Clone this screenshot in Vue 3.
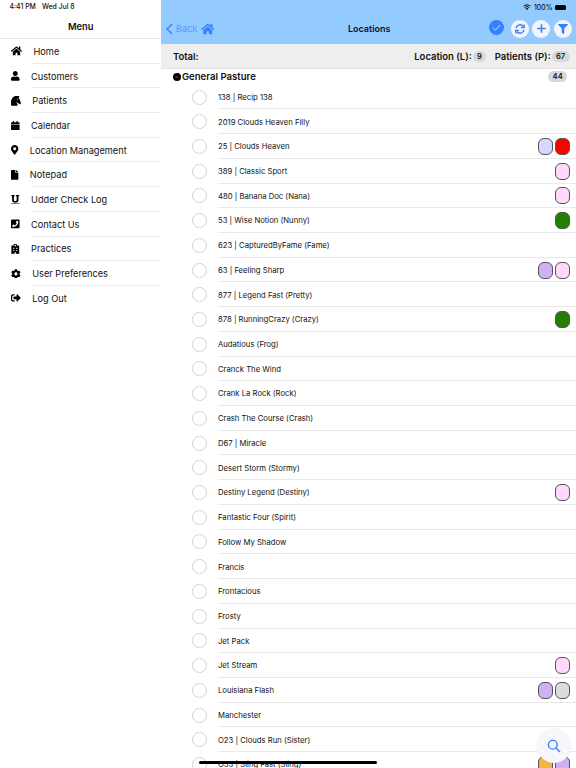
<template>
    <div class="screen">
        <aside class="menu">
            <div class="status">
                <span>4:41 PM</span>
                <span>Wed Jul 8</span>
            </div>
            <h2 class="menu-title">Menu</h2>
            <ul class="menu-list">
                <li v-for="item in menu" :key="item.label" class="menu-item">
                    <svg class="menu-icon" :viewBox="`0 0 ${item.w} 512`" :style="{ width: item.w / 512 * 9.8 + 'px' }">
                        <path :d="item.path" fill-rule="evenodd" />
                    </svg>
                    <span class="menu-label">{{ item.label }}</span>
                </li>
            </ul>
        </aside>

        <main class="content">
            <header class="header">
                <div class="battery-row">
                    <svg class="wifi" viewBox="0 0 16 12">
                        <path d="M1 4.5a10 10 0 0 1 14 0M3.5 7.2a6.4 6.4 0 0 1 9 0" fill="none" stroke="#111" stroke-width="2" />
                        <path d="M8 12L5.2 9.2a4 4 0 0 1 5.6 0z" />
                    </svg>
                    <span>100%</span>
                    <span class="battery"></span>
                </div>
                <div class="toolbar">
                    <div class="back">
                        <svg class="chevron" viewBox="0 0 8 13">
                            <path d="M7 .8L1.2 6.5 7 12.2" />
                        </svg>
                        <span>Back</span>
                        <svg class="home" viewBox="0 0 576 512"><path :d="homePath" /></svg>
                    </div>
                    <h1 class="title">Locations</h1>
                    <div class="actions">
                        <span class="action check">
                            <svg viewBox="0 0 16 16"><path d="M4.2 8.4l2.6 2.5 5.2-5.6" /></svg>
                        </span>
                        <span class="action">
                            <svg class="line sync" viewBox="0 0 16 16">
                                <path d="M2.6 6.8a5.5 5.5 0 0 1 9.8-2.2M13.4 9.2a5.5 5.5 0 0 1-9.8 2.2" />
                                <path d="M13.6 2v4.2H9.4M2.4 14V9.8h4.2" />
                            </svg>
                        </span>
                        <span class="action">
                            <svg class="line" viewBox="0 0 16 16"><path d="M8 2.8v10.4M2.8 8h10.4" /></svg>
                        </span>
                        <span class="action">
                            <svg class="filter" viewBox="0 0 512 512">
                                <path d="M487.976 0H24.028C2.71 0-8.047 25.866 7.058 40.971L192 225.941V432c0 7.831 3.821 15.17 10.237 19.662l80 55.98C298.02 518.69 320 507.493 320 487.98V225.941l184.947-184.97C520.021 25.896 509.338 0 487.976 0z" />
                            </svg>
                        </span>
                    </div>
                </div>
            </header>

            <div class="totals">
                <span class="total-label">Total:</span>
                <span>Location (L):</span>
                <span class="badge location-badge">9</span>
                <span>Patients (P):</span>
                <span class="badge">67</span>
            </div>

            <div class="group">
                <svg class="collapse" viewBox="0 0 16 16">
                    <circle cx="8" cy="8" r="8" />
                    <path d="M4.5 8h7" stroke="#777" stroke-width="1.6" />
                </svg>
                <span>General Pasture</span>
                <span class="badge group-badge">44</span>
            </div>

            <ul class="patients">
                <li v-for="p in patients" :key="p.name" class="patient">
                    <span class="radio"></span>
                    <div class="patient-body">
                        <span class="patient-name">{{ p.name }}</span>
                        <span v-for="c in p.tags" :key="c" class="tag" :class="c"></span>
                    </div>
                </li>
            </ul>
        </main>

        <button class="search">
            <svg viewBox="0 0 16 16">
                <circle cx="6.6" cy="6.6" r="5" />
                <path d="M10.3 10.3l4.6 4.6" />
            </svg>
        </button>
        <div class="home-indicator"></div>
    </div>
</template>

<script setup>
const homePath = 'M280.37 148.26L96 300.11V464a16 16 0 0 0 16 16l112.06-.29a16 16 0 0 0 15.92-16V368a16 16 0 0 1 16-16h64a16 16 0 0 1 16 16v95.64a16 16 0 0 0 16 16.05L464 480a16 16 0 0 0 16-16V300L295.67 148.26a12.19 12.19 0 0 0-15.3 0zM571.6 251.47L488 182.56V44.05a12 12 0 0 0-12-12h-56a12 12 0 0 0-12 12v72.61L318.47 43a48 48 0 0 0-61 0L4.34 251.47a12 12 0 0 0-1.6 16.9l25.5 31A12 12 0 0 0 45.15 301l235.22-193.74a12.19 12.19 0 0 1 15.3 0L530.9 301a12 12 0 0 0 16.9-1.6l25.5-31a12 12 0 0 0-1.7-16.93z';

const menu = [
    { label: 'Home', w: 576, path: homePath },
    { label: 'Customers', w: 448, path: 'M224 256c70.7 0 128-57.3 128-128S294.7 0 224 0 96 57.3 96 128s57.3 128 128 128zm89.6 32h-16.7c-22.2 10.2-46.9 16-72.9 16s-50.6-5.8-72.9-16h-16.7C60.2 288 0 348.2 0 422.4V464c0 26.5 21.5 48 48 48h352c26.5 0 48-21.5 48-48v-41.6c0-74.2-60.2-134.4-134.4-134.4z' },
    { label: 'Patients', w: 512, path: 'M505 310L430 145l-25-45 30-100H265C130 0 0 140 0 325v145c0 25 15 42 42 42h265c30 0 50-30 40-58l-30-75c-25-5-45-18-60-40h70c18 35 30 40 57 40h22l34 42c10 12 25 16 40 12l16-9c20-7 25-80 9-114zM330 135a27 27 0 1 1 0 54 27 27 0 0 1 0-54z' },
    { label: 'Calendar', w: 448, path: 'M12 192h424c6.6 0 12 5.4 12 12v260c0 26.5-21.5 48-48 48H48c-26.5 0-48-21.5-48-48V204c0-6.6 5.4-12 12-12zm436-16v-64c0-26.5-21.5-48-48-48h-48V12c0-6.6-5.4-12-12-12h-40c-6.6 0-12 5.4-12 12v52H160V12c0-6.6-5.4-12-12-12h-40c-6.6 0-12 5.4-12 12v52H48C21.5 64 0 85.5 0 112v64z' },
    { label: 'Location Management', w: 384, path: 'M172.268 501.67C26.97 291.031 0 269.413 0 192 0 85.961 85.961 0 192 0s192 85.961 192 192c0 77.413-26.97 99.031-172.268 309.67-9.535 13.774-29.93 13.773-39.464 0zM192 272c44.183 0 80-35.817 80-80s-35.817-80-80-80-80 35.817-80 80 35.817 80 80 80z' },
    { label: 'Notepad', w: 384, path: 'M224 136V0H24C10.7 0 0 10.7 0 24v464c0 13.3 10.7 24 24 24h336c13.3 0 24-10.7 24-24V160H248c-13.2 0-24-10.8-24-24zm160-14.1v6.1H256V0h6.1c6.4 0 12.5 2.5 17 7l97.9 98c4.5 4.5 7 10.6 7 16.9z' },
    { label: 'Udder Check Log', w: 448, path: 'M16 0h176v64h-40v190c0 45 27 68 72 68s72-23 72-68V64h-40V0h176v64h-40v192c0 88-66 144-168 144S56 344 56 256V64H16zM0 448h448v64H0z' },
    { label: 'Contact Us', w: 448, path: 'M400 32H48A48 48 0 0 0 0 80v352a48 48 0 0 0 48 48h352a48 48 0 0 0 48-48V80a48 48 0 0 0-48-48zM94 416c-7.033 0-13.057-4.873-14.616-11.627l-14.998-65a15 15 0 0 1 8.707-17.16l69.998-29.999a15 15 0 0 1 17.518 4.289l30.997 37.885c48.944-22.963 88.297-62.858 110.781-110.78l-37.886-30.997a15.001 15.001 0 0 1-4.289-17.518l30-69.998a15 15 0 0 1 17.16-8.707l65 14.998A14.997 14.997 0 0 1 384 126c0 160.292-129.945 290-290 290z' },
    { label: 'Practices', w: 448, path: 'M0 488h20V100c0-12 10-20 24-20h92V24c0-14 10-24 24-24h128c14 0 24 10 24 24v56h92c14 0 24 8 24 20v388h20v24H256v-84h-64v84H0zM204 40v30h-30v36h30v30h40v-30h30V70h-30V40zM118 200v56h56v-56zM274 200v56h56v-56zM118 308v56h56v-56zM274 308v56h56v-56z' },
    { label: 'User Preferences', w: 512, path: 'M487.4 315.7l-42.6-24.6c4.3-23.2 4.3-47 0-70.2l42.6-24.6c4.9-2.8 7.1-8.6 5.5-14-11.1-35.6-30-67.8-54.7-94.6-3.8-4.1-10-5.1-14.8-2.3L380.8 110c-17.9-15.4-38.5-27.3-60.8-35.1V25.8c0-5.6-3.9-10.5-9.4-11.7-36.7-8.2-74.3-7.8-109.2 0-5.5 1.2-9.4 6.1-9.4 11.7V75c-22.2 7.9-42.8 19.8-60.8 35.1L88.7 85.5c-4.9-2.8-11-1.9-14.8 2.3-24.7 26.7-43.6 58.9-54.7 94.6-1.7 5.4.6 11.2 5.5 14L67.3 221c-4.3 23.2-4.3 47 0 70.2l-42.6 24.6c-4.9 2.8-7.1 8.6-5.5 14 11.1 35.6 30 67.8 54.7 94.6 3.8 4.1 10 5.1 14.8 2.3l42.6-24.6c17.9 15.4 38.5 27.3 60.8 35.1v49.2c0 5.6 3.9 10.5 9.4 11.7 36.7 8.2 74.3 7.8 109.2 0 5.5-1.2 9.4-6.1 9.4-11.7v-49.2c22.2-7.9 42.8-19.8 60.8-35.1l42.6 24.6c4.9 2.8 11 1.9 14.8-2.3 24.7-26.7 43.6-58.9 54.7-94.6 1.5-5.5-.7-11.3-5.6-14.1zM256 336c-44.1 0-80-35.9-80-80s35.9-80 80-80 80 35.9 80 80-35.9 80-80 80z' },
    { label: 'Log Out', w: 512, path: 'M497 273L329 441c-15 15-41 4.5-41-17v-96H152c-13.3 0-24-10.7-24-24v-96c0-13.3 10.7-24 24-24h136V88c0-21.4 25.9-32 41-17l168 168c9.3 9.4 9.3 24.6 0 34zM192 436v-40c0-6.6-5.4-12-12-12H96c-17.7 0-32-14.3-32-32V160c0-17.7 14.3-32 32-32h84c6.6 0 12-5.4 12-12V76c0-6.6-5.4-12-12-12H96c-53 0-96 43-96 96v192c0 53 43 96 96 96h84c6.6 0 12-5.4 12-12z' },
];

const patients = [
    { name: '138 | Recip 138' },
    { name: '2019 Clouds Heaven Filly' },
    { name: '25 | Clouds Heaven', tags: ['lavender', 'red'] },
    { name: '389 | Classic Sport', tags: ['pink'] },
    { name: '480 | Banana Doc (Nana)', tags: ['pink'] },
    { name: '53 | Wise Notion (Nunny)', tags: ['green'] },
    { name: '623 | CapturedByFame (Fame)' },
    { name: '63 | Feeling Sharp', tags: ['purple', 'pink'] },
    { name: '877 | Legend Fast (Pretty)' },
    { name: '878 | RunningCrazy (Crazy)', tags: ['green'] },
    { name: 'Audatious (Frog)' },
    { name: 'Cranck The Wind' },
    { name: 'Crank La Rock (Rock)' },
    { name: 'Crash The Course (Crash)' },
    { name: 'D67 | Miracle' },
    { name: 'Desert Storm (Stormy)' },
    { name: 'Destiny Legend (Destiny)', tags: ['pink'] },
    { name: 'Fantastic Four (Spirit)' },
    { name: 'Follow My Shadow' },
    { name: 'Francis' },
    { name: 'Frontacious' },
    { name: 'Frosty' },
    { name: 'Jet Pack' },
    { name: 'Jet Stream', tags: ['pink'] },
    { name: 'Louisiana Flash', tags: ['purple', 'grey'] },
    { name: 'Manchester' },
    { name: 'O23 | Clouds Run (Sister)' },
    { name: 'O33 | Sling Fast (Sling)', tags: ['orange', 'purple'] },
];
</script>

<style>
body {
    margin: 0;
    background: #fff;
}
</style>

<style scoped>
.screen {
    position: relative;
    display: flex;
    width: 576px;
    height: 768px;
    overflow: hidden;
    background: #fff;
    color: #111;
    font-family: Inter, "Liberation Sans", sans-serif;
}
ul {
    list-style: none;
    margin: 0;
    padding: 0;
}
svg {
    display: block;
    flex: none;
}
.menu {
    width: 161.4px;
    flex: none;
}
.status {
    display: flex;
    gap: 6px;
    height: 14px;
    padding-left: 9.5px;
    font-size: 6.9px;
    line-height: 14px;
    font-weight: 500;
}
.menu-title {
    height: 24px;
    margin: 0;
    border-bottom: 1px solid #e4e4e4;
    font-size: 9.3px;
    line-height: 25px;
    font-weight: 600;
    text-align: center;
}
.menu-item {
    position: relative;
    display: flex;
    align-items: center;
    height: 24.7px;
    padding-left: 11.3px;
}
.menu-item:not(:last-child)::after {
    content: '';
    position: absolute;
    left: 32px;
    right: 1px;
    bottom: 0;
    height: 1px;
    background: #ebebeb;
}
.menu-icon {
    height: 9.8px;
    fill: #000;
}
.menu-label {
    margin-left: 11.2px;
    font-size: 9.2px;
}
.content {
    flex: 1;
    min-width: 0;
}
.header {
    height: 44px;
    background: #93cbff;
}
.battery-row {
    display: flex;
    align-items: center;
    justify-content: flex-end;
    height: 14px;
    padding-right: 10px;
    font-size: 6.9px;
    font-weight: 500;
}
.wifi {
    width: 8px;
    height: 6px;
    margin-right: 2.5px;
}
.battery {
    width: 11.5px;
    height: 5px;
    margin-left: 2px;
    border-radius: 1.5px;
    background: #000;
}
.toolbar {
    display: grid;
    grid-template-columns: 1fr auto 1fr;
    align-items: center;
    height: 29.4px;
    padding: 0 4px 0 5px;
}
.back {
    display: flex;
    align-items: center;
    color: #5a98ff;
    font-size: 9.2px;
}
.chevron {
    width: 7px;
    height: 12px;
    margin-right: 2.5px;
    fill: none;
    stroke: #3880ff;
    stroke-width: 1.6;
}
.home {
    width: 13.5px;
    height: 12px;
    margin-left: 4px;
    fill: #3880ff;
}
.title {
    margin: 0;
    font-size: 9px;
    font-weight: 600;
}
.actions {
    display: flex;
    justify-content: flex-end;
    align-items: center;
    gap: 3.6px;
}
.action {
    display: flex;
    align-items: center;
    justify-content: center;
    width: 18px;
    height: 18px;
    border-radius: 50%;
    background: #f4f5f8;
}
.check {
    width: 15px;
    height: 15px;
    margin: -2px 3px 0 0;
    background: #3880ff;
}
.check svg {
    width: 15px;
    height: 15px;
    fill: none;
    stroke: #dcebff;
    stroke-width: 1;
}
.line {
    width: 13px;
    height: 13px;
    fill: none;
    stroke: #3880ff;
    stroke-width: 1.9;
}
.sync {
    width: 12px;
    height: 12px;
}
.filter {
    width: 10px;
    height: 10px;
    fill: #3880ff;
}
.totals {
    display: flex;
    align-items: center;
    height: 25px;
    padding: 0 6.5px 0 11.5px;
    box-sizing: border-box;
    border-bottom: 1px solid #e2e2e2;
    background: #eee;
    font-size: 9.5px;
    font-weight: 600;
}
.total-label {
    margin-right: auto;
}
.badge {
    padding: 0 4.3px;
    border-radius: 6px;
    background: #d7d8da;
    font-size: 7.6px;
    line-height: 11px;
    font-weight: 600;
}
.totals .badge {
    margin-left: 1px;
}
.totals .location-badge {
    margin-right: 8.5px;
}
.group {
    display: flex;
    align-items: center;
    height: 15.7px;
    padding: 0 9px 0 11.5px;
    font-size: 9.6px;
    font-weight: 600;
}
.collapse {
    width: 8px;
    height: 8px;
    margin-right: 1px;
}
.group-badge {
    margin-left: auto;
}
.patient {
    display: flex;
    align-items: center;
    height: 24.72px;
    padding-left: 30.6px;
}
.radio {
    flex: none;
    width: 15px;
    height: 15px;
    box-sizing: border-box;
    border: 1px solid #d2d2d2;
    border-radius: 50%;
}
.patient-body {
    display: flex;
    align-items: center;
    flex: 1;
    gap: 2px;
    height: 100%;
    margin-left: 11px;
    padding: 1px 6px 0 0;
    box-sizing: border-box;
    border-bottom: 1px solid #e9e9e9;
}
.patient-name {
    flex: 1;
    padding-top: 0.6px;
    font-size: 7.7px;
}
.tag {
    width: 15px;
    height: 17px;
    box-sizing: border-box;
    border: 1px solid #555;
    border-radius: 6px;
}
.lavender { background: #d8d8ff; }
.red { background: #f00; }
.pink { background: #ffd8fb; }
.green { background: #228000; }
.purple { background: #d0b0f4; }
.grey { background: #dcdcdc; }
.orange { background: #f5b43c; }
.search {
    position: absolute;
    right: 5px;
    bottom: 5px;
    display: flex;
    align-items: center;
    justify-content: center;
    width: 34px;
    height: 34px;
    padding: 0;
    border: none;
    border-radius: 50%;
    background: #f5f7fb;
    box-shadow: 0 0 3px rgba(0, 0, 0, 0.06);
}
.search svg {
    width: 14px;
    height: 14px;
    fill: none;
    stroke: #3880ff;
    stroke-width: 1.6;
}
.home-indicator {
    position: absolute;
    left: 199px;
    bottom: 4.5px;
    width: 178px;
    height: 3px;
    border-radius: 2px;
    background: #000;
}
</style>
